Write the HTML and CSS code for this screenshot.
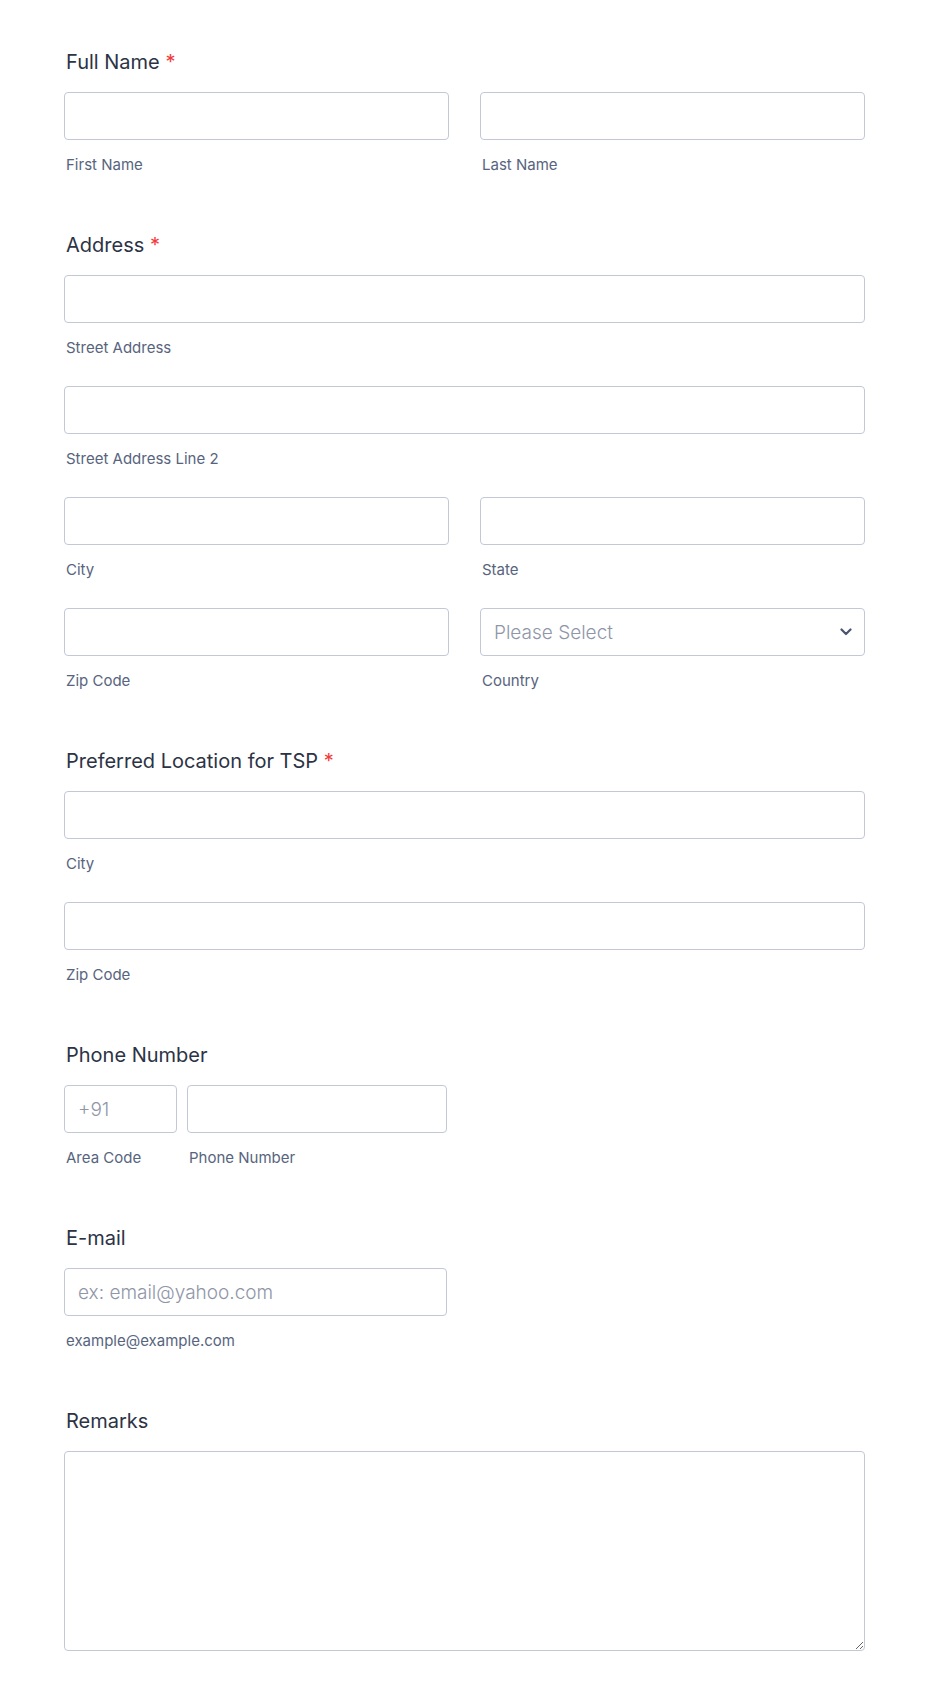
FILE: index.html
```html
<!DOCTYPE html>
<html lang="en">
  <head>
    <meta charset="UTF-8" />
    <meta name="viewport" content="width=device-width, initial-scale=1.0" />
    <title>TSP Registration</title>
    <link rel="stylesheet" href="styles.css">
  </head>
  <body>
    <form class="form" id="tspForm">
      <div class="section">
        <label class="label">Full Name <span class="req">*</span></label>
        <div class="row two">
          <div class="field">
            <input type="text" id="firstName" />
            <span class="sub">First Name</span>
          </div>
          <div class="field">
            <input type="text" id="lastName" />
            <span class="sub">Last Name</span>
          </div>
        </div>
      </div>

      <div class="section">
        <label class="label">Address <span class="req">*</span></label>
        <div class="field">
          <input type="text" id="street" />
          <span class="sub">Street Address</span>
        </div>
        <div class="field">
          <input type="text" id="street2" />
          <span class="sub">Street Address Line 2</span>
        </div>
        <div class="row two">
          <div class="field">
            <input type="text" id="city" />
            <span class="sub">City</span>
          </div>
          <div class="field">
            <input type="text" id="state" />
            <span class="sub">State</span>
          </div>
        </div>
        <div class="row two">
          <div class="field">
            <input type="text" id="zip" />
            <span class="sub">Zip Code</span>
          </div>
          <div class="field">
            <div class="select-wrap">
              <select id="country">
                <option value="">Please Select</option>
                <option value="India">India</option>
                <option value="USA">USA</option>
              </select>
              <svg class="chevron" width="12" height="8" viewBox="0 0 12 8">
                <path d="M1.5 1.5 L6 6 L10.5 1.5" fill="none" stroke="#4a5470" stroke-width="2.2" stroke-linecap="round" stroke-linejoin="round" />
              </svg>
            </div>
            <span class="sub">Country</span>
          </div>
        </div>
      </div>

      <div class="section">
        <label class="label">Preferred Location for TSP <span class="req">*</span></label>
        <div class="field">
          <input type="text" id="prefCity" />
          <span class="sub">City</span>
        </div>
        <div class="field">
          <input type="text" id="prefZip" />
          <span class="sub">Zip Code</span>
        </div>
      </div>

      <div class="section">
        <label class="label">Phone Number</label>
        <div class="row phone">
          <div class="field">
            <input type="text" id="areaCode" placeholder="+91" />
            <span class="sub">Area Code</span>
          </div>
          <div class="field">
            <input type="text" id="phone" />
            <span class="sub">Phone Number</span>
          </div>
        </div>
      </div>

      <div class="section">
        <label class="label">E-mail</label>
        <div class="field half">
          <input type="email" id="email" placeholder="ex: email@yahoo.com" />
          <span class="sub">example@example.com</span>
        </div>
      </div>

      <div class="section">
        <label class="label">Remarks</label>
        <textarea id="remarks"></textarea>
      </div>
    </form>
  </body>
</html>
```

FILE: styles.css
```css
body {
  margin: 0;
  background: #ffffff;
  font-family: Inter, "Noto Sans", sans-serif;
  color: #2c3345;
}

.form {
  width: 801px;
  margin: 0 0 0 64px;
  padding-top: 50px;
}

.section {
  padding-bottom: 30px;
}

.label {
  display: block;
  font-size: 20px;
  line-height: 24px;
  font-weight: 400;
  color: #2c3345;
  padding-left: 2px;
  margin-bottom: 18px;
}

.req {
  color: #f23a3c;
}

.row {
  display: grid;
}

.row.two {
  grid-template-columns: 1fr 1fr;
  column-gap: 31px;
}

.row.phone {
  width: 383px;
  grid-template-columns: 113px 1fr;
  column-gap: 10px;
}

.field {
  display: flex;
  flex-direction: column;
  margin-bottom: 28.5px;
}

.field.half {
  width: 383px;
}

.sub {
  display: block;
  margin-top: 14.5px;
  font-size: 15px;
  line-height: 20px;
  color: #57647e;
  padding-left: 2px;
}

input,
select,
textarea {
  box-sizing: border-box;
  width: 100%;
  height: 48px;
  padding: 0 13px;
  border: 1px solid #c3c8d6;
  border-radius: 4px;
  background: #ffffff;
  font-family: Inter, "Noto Sans", sans-serif;
  font-size: 19px;
  font-weight: 300;
  color: #2c3345;
  outline: none;
}

input::placeholder {
  color: #8f96a8;
}

.select-wrap {
  position: relative;
}

select {
  appearance: none;
  -webkit-appearance: none;
  color: #8f96a8;
}

.chevron {
  position: absolute;
  right: 13px;
  top: 20px;
}

textarea {
  display: block;
  height: 200px;
  padding: 12px 13px;
  resize: both;
}
```
